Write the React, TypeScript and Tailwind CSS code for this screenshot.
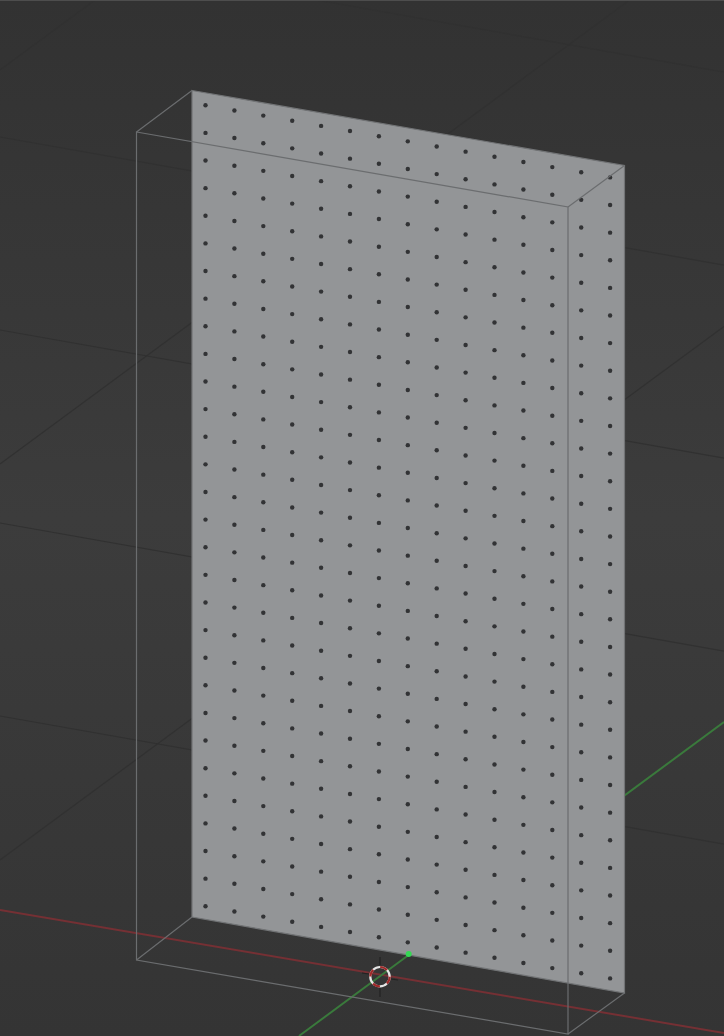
// Blender viewport: point grid on a plane with its bounding box, floor grid, axes and 3D cursor

const COLS = 15;
const ROWS = 30;

const dots: { x: number; y: number }[] = [];
for (let c = 0; c < COLS; c++) {
  for (let r = 0; r < ROWS; r++) {
    dots.push({ x: 205.5 + c * 28.9, y: 105.3 + c * 5.15 + r * 27.62 });
  }
}

const SLOPE_X = 0.177;
const SLOPE_Y = -0.737;
const gridX = [-56, 137, 330, 523, 716];
const gridY = [70, 464, 860];

export default function App() {
  return (
    <div className="w-[724px] h-[1036px] overflow-hidden border-t border-[#4d4d4d] bg-linear-to-b from-[#323232] via-[#3c3c3c] to-[#343434]">
      <svg width={724} height={1036} viewBox="0 1 724 1036" className="block blur-[0.4px]">
        {/* floor grid */}
        <g className="stroke-[#313131]" strokeWidth={1.2}>
          {gridX.map((c) => (
            <line key={c} x1={0} y1={c} x2={724} y2={c + 724 * SLOPE_X} />
          ))}
          {gridY.map((c) => (
            <line key={c} x1={0} y1={c} x2={724} y2={c + 724 * SLOPE_Y} />
          ))}
        </g>

        {/* axes */}
        <line x1={0} y1={910} x2={724} y2={1033} className="stroke-[#753034]" strokeWidth={2} />
        <line x1={299} y1={1036} x2={724} y2={722} className="stroke-[#3a7a3c]" strokeWidth={2} />

        {/* plane */}
        <polygon
          points="192,90.5 624.5,165.5 624.5,993 192,917"
          className="fill-[#939597] stroke-[#727476]"
          strokeWidth={1.2}
        />

        {dots.map((d, i) => (
          <circle key={i} cx={d.x} cy={d.y} r={2.2} className="fill-[#323335]" />
        ))}

        {/* bounding box */}
        <g className="stroke-[#6b6d6f]" strokeWidth={1.2} fill="none">
          <polygon points="136.5,132 568,207 568,1034 136.5,960" />
          <line x1={136.5} y1={132} x2={192} y2={90.5} />
          <line x1={568} y1={207} x2={624.5} y2={165.5} />
          <line x1={136.5} y1={960} x2={192} y2={917} />
          <line x1={568} y1={1034} x2={624.5} y2={993} />
        </g>

        {/* origin */}
        <circle cx={408.7} cy={954} r={3} className="fill-[#35d954]" />

        {/* 3D cursor */}
        <g className="stroke-[#222222]" strokeWidth={1.2}>
          <line x1={380} y1={957} x2={380} y2={965} />
          <line x1={380} y1={988} x2={380} y2={997} />
          <line x1={362} y1={973} x2={369} y2={974} />
          <line x1={391} y1={979} x2={398} y2={980} />
        </g>
        <circle cx={380} cy={976.7} r={9.7} fill="none" strokeWidth={2.2} className="stroke-[#e6e6e6]" />
        <circle
          cx={380}
          cy={976.7}
          r={9.7}
          fill="none"
          strokeWidth={2.2}
          strokeDasharray="7.6 7.6"
          className="stroke-[#9e2a2a]"
        />
      </svg>
    </div>
  );
}
